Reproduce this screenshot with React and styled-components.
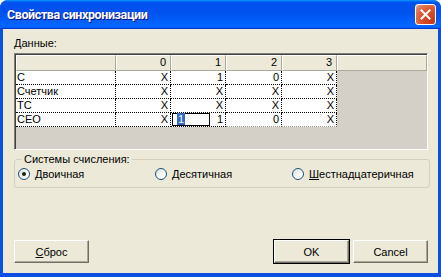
import React from 'react'
import styled, { createGlobalStyle } from 'styled-components'

const GlobalStyle = createGlobalStyle`
    html, body {
        margin: 0;
        padding: 0;
        background: #fff;
    }
    body {
        font-family: 'Liberation Sans', Arial, sans-serif;
        font-size: 11px;
    }
`;

const Frame = styled.div`
    width: 441px;
    height: 277px;
    box-sizing: border-box;
    display: flex;
    flex-direction: column;
    border-radius: 8px 8px 0 0;
    background: #0a4fe2;
    padding: 0 3px 4px;
    overflow: hidden;
`;

const TitleBar = styled.div`
    height: 29px;
    margin: 0 -3px;
    padding: 0 5px 0 7px;
    display: flex;
    align-items: center;
    justify-content: space-between;
    background: linear-gradient(180deg, #0997ff, #0053ee 8%, #0050ee 40%, #0066ff 88%, #0066ff 93%, #005bff 95%, #003dd7 96%, #003dd7);
`;

const Title = styled.span`
    color: #fff;
    font-family: 'Roboto', 'Liberation Sans', Arial, sans-serif;
    font-weight: bold;
    font-size: 12.5px;
    letter-spacing: -0.4px;
    text-shadow: 1px 1px 0 #0f1089;
`;

const CloseButton = styled.div`
    width: 21px;
    height: 21px;
    box-sizing: border-box;
    border: 1px solid #fff;
    border-radius: 3px;
    background: radial-gradient(circle at 85% 85%, #c7391a 0%, #d9532c 50%, #e27a57 80%, #f3b39a 100%);
    display: flex;
    align-items: center;
    justify-content: center;
`;

const Body = styled.div`
    flex: 1;
    background: #ece9d8;
    display: flex;
    flex-direction: column;
    padding: 0 10px 10px 11px;
    color: #000;
`;

const Label = styled.div`
    line-height: 14px;
    padding-top: 7px;
`;

const GridBox = styled.div`
    margin-top: 3px;
    height: 97px;
    box-sizing: border-box;
    border-top: 1px solid #808080;
    border-left: 1px solid #808080;
    border-right: 1px solid #fff;
    border-bottom: 1px solid #fff;
    box-shadow: inset 1px 1px 0 #404040, inset -1px -1px 0 #d4d0c8;
    background: #d4d0c8;
    padding: 1px 0 0 1px;
    overflow: hidden;
`;

const Row = styled.div`
    display: flex;
    height: ${p => (p.$header ? '16px' : '14px')};
`;

const HeaderCell = styled.div`
    box-sizing: border-box;
    width: ${p => p.$w}px;
    flex: ${p => (p.$fill ? '1' : 'none')};
    background: #ece9d8;
    border-top: 1px solid #fff;
    border-left: 1px solid #fff;
    border-right: 1px solid #aca899;
    border-bottom: 1px solid #aca899;
    text-align: right;
    padding-right: 4px;
    line-height: 13px;
`;

const NameCell = styled.div`
    box-sizing: border-box;
    width: 100px;
    background: #fff;
    border-right: 1px dotted #000;
    border-bottom: 1px dotted #000;
    padding-left: 1px;
    line-height: 13px;
    white-space: nowrap;
`;

const ValueCell = styled.div`
    position: relative;
    box-sizing: border-box;
    width: ${p => p.$w}px;
    background: #fff;
    border-right: 1px dotted #000;
    border-bottom: 1px dotted ${p => (p.$last ? '#9a9a9a' : '#000')};
    text-align: right;
    padding-right: 2px;
    line-height: 13px;
`;

const Editor = styled.div`
    position: absolute;
    left: 1px;
    top: 0;
    width: 38px;
    height: 13px;
    box-sizing: border-box;
    border: 1px solid #000;
    background: #fff;
    text-align: left;
    padding-left: 4px;
    line-height: 11px;
`;

const Selected = styled.span`
    background: #316ac5;
    color: #fff;
    padding: 0 1px;
`;

const GroupBox = styled.fieldset`
    margin: 3px -2px 0 0;
    padding: 0 2px 5px 3px;
    border: 1px solid #d0d0bf;
    border-radius: 3px;
`;

const Legend = styled.legend`
    margin-left: 4px;
    padding: 0 2px;
    line-height: 13px;
    font-size: 11px;
`;

const RadioRow = styled.div`
    display: grid;
    grid-template-columns: 137px 137px 1fr;
    height: 16px;
    align-items: center;
`;

const RadioItem = styled.label`
    display: flex;
    align-items: center;
    gap: 5px;
    white-space: nowrap;
`;

const RadioCircle = styled.span`
    width: 12px;
    height: 12px;
    box-sizing: border-box;
    border-radius: 50%;
    border: 1px solid #1c5180;
    background: linear-gradient(135deg, #dcdcd7, #fff 70%);
    display: flex;
    align-items: center;
    justify-content: center;
    &::after {
        content: '';
        display: ${p => (p.$on ? 'block' : 'none')};
        width: 4px;
        height: 4px;
        border-radius: 50%;
        background: #102810;
    }
`;

const Buttons = styled.div`
    margin-top: auto;
    display: flex;
    gap: 4px;
`;

const Button = styled.div`
    width: 75px;
    height: 23px;
    box-sizing: border-box;
    display: flex;
    align-items: center;
    justify-content: center;
    background: #ece9d8;
    border-top: 1px solid #fff;
    border-left: 1px solid #fff;
    border-right: 1px solid #716f64;
    border-bottom: 1px solid #716f64;
    box-shadow: inset -1px -1px 0 #aca899;
    outline: ${p => (p.$default ? '1px solid #000' : 'none')};
    outline-offset: 0;
    margin-left: ${p => (p.$push ? 'auto' : '0')};
    font-size: 11px;
`;

const U = styled.span`
    text-decoration: underline;
`;

const cols = [55, 55, 56, 55];
const rows = [
    { name: 'C', vals: ['X', '1', '0', 'X'] },
    { name: 'Счетчик', vals: ['X', 'X', 'X', 'X'] },
    { name: 'TC', vals: ['X', 'X', 'X', 'X'] },
    { name: 'CEO', vals: ['X', '1', '0', 'X'], edit: 1, last: true },
];

export default function App() {
    return (
        <>
            <GlobalStyle />
            <Frame>
                <TitleBar>
                    <Title>Свойства синхронизации</Title>
                    <CloseButton>
                        <svg width="11" height="11" viewBox="0 0 11 11">
                            <path d="M1.5 1.5 L9.5 9.5 M9.5 1.5 L1.5 9.5" stroke="#fff" strokeWidth="2" strokeLinecap="square" />
                        </svg>
                    </CloseButton>
                </TitleBar>
                <Body>
                    <Label><U>Д</U>анные:</Label>
                    <GridBox>
                        <Row $header>
                            <HeaderCell $w={100} />
                            {cols.map((w, i) => <HeaderCell key={i} $w={w}>{i}</HeaderCell>)}
                            <HeaderCell $fill />
                        </Row>
                        {rows.map(r => (
                            <Row key={r.name}>
                                <NameCell>{r.name}</NameCell>
                                {r.vals.map((v, i) => (
                                    <ValueCell key={i} $w={cols[i]} $last={r.last && i > 1}>
                                        {v}
                                        {r.edit === i && <Editor><Selected>1</Selected></Editor>}
                                    </ValueCell>
                                ))}
                            </Row>
                        ))}
                    </GridBox>
                    <GroupBox>
                        <Legend>Системы счисления:</Legend>
                        <RadioRow>
                            <RadioItem><RadioCircle $on />Двоичная</RadioItem>
                            <RadioItem><RadioCircle /><span><U>Д</U>есятичная</span></RadioItem>
                            <RadioItem><RadioCircle /><span><U>Ш</U>естнадцатеричная</span></RadioItem>
                        </RadioRow>
                    </GroupBox>
                    <Buttons>
                        <Button><span><U>С</U>брос</span></Button>
                        <Button $push $default>OK</Button>
                        <Button>Cancel</Button>
                    </Buttons>
                </Body>
            </Frame>
        </>
    )
}
